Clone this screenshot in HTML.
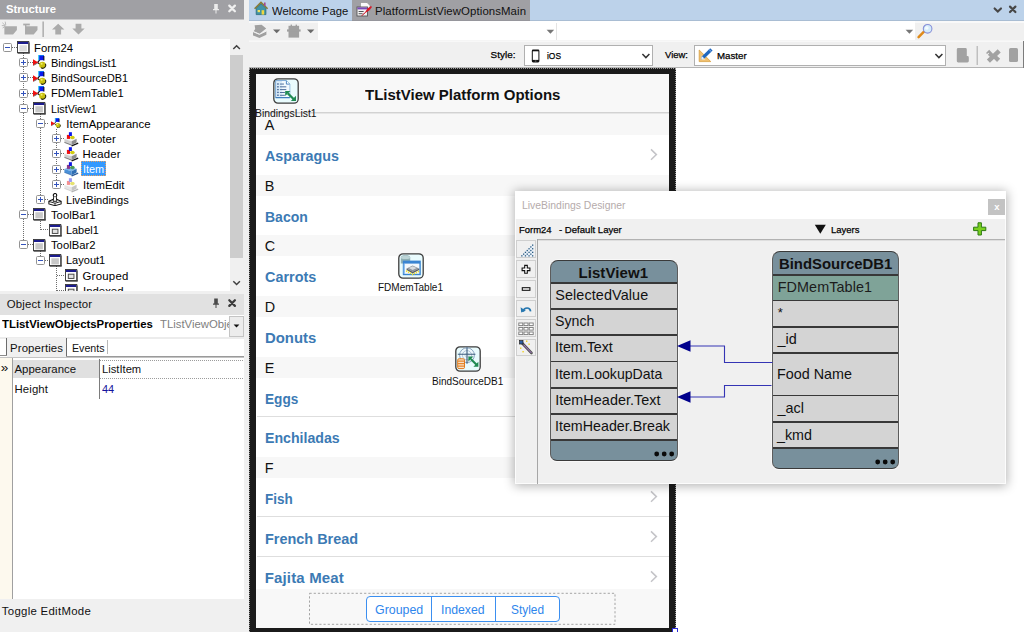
<!DOCTYPE html>
<html lang="en"><head><meta charset="utf-8"><title>PlatformListViewOptionsMain</title>
<style>
html,body{margin:0;padding:0;}
body{width:1024px;height:632px;overflow:hidden;position:relative;background:#f0f0f0;font-family:"Liberation Sans",sans-serif;}
body div,body span.t,body svg{position:absolute;}
div{box-sizing:border-box;}
.t{display:block;line-height:20px;height:20px;white-space:pre;}

</style></head>
<body>
<div style="left:0px;top:0px;width:244px;height:19px;background:#a0a0a4;"></div>
<div style="left:0px;top:19px;width:244px;height:1px;background:#c6c6c8;"></div>
<span class="t" id="t0" style="left:6.20px;top:-0.75px;font-size:11.4px;color:#fff;font-weight:bold;transform:scaleX(0.9873);transform-origin:0 0;">Structure</span>
<svg style="left:210px;top:2px" width="30" height="14" viewBox="0 0 30 14">
<path d="M4.2 2h3.6v5h1.2v1.2H6.5v3.3h-1V8.2H3V7h1.2z" fill="#ececec"/>
<path d="M19.3 3.3l5.6 5.6M24.9 3.3l-5.6 5.6" stroke="#f0f0f0" stroke-width="2.3" stroke-linecap="round" transform="translate(0,0.3)"/>
</svg>
<div style="left:0px;top:20px;width:244px;height:19px;background:#f0f0f0;"></div>
<svg style="left:0;top:19px" width="100" height="20" viewBox="0 0 100 20">
<g fill="#ababab">
<path d="M4.400 7.300h12.500v3.800l-3.800 4.400H4.400z"/><path d="M2.400 3.800l3 2.800M5.200 2.600l0.600 3.600M1.800 6.600h3.400M2.600 9l2.400-1.600" stroke="#b4b4b4" stroke-width="0.900" fill="none"/>
<path d="M25 7.300h12.500v3.800l-3.800 4.400H25z"/><path d="M23.200 4.600h6.600v1.800h-6.600z" /><rect x="25" y="5" width="1.400" height="9"/>
<rect x="42.600" y="2.500" width="1" height="15.500" fill="#8c8c8c"/>
<path d="M58.200 4.800l6.200 5.800h-3.300v4.800h-5.800v-4.800H52z"/>
<path d="M78.500 15.400l6.200-5.800h-3.300V4.800h-5.800v4.800h-3.300z"/>
</g></svg>
<div style="left:0px;top:39px;width:230px;height:252px;background:#fff;"></div>
<div style="left:230px;top:39px;width:13px;height:252px;background:#f0f0f0;"></div>
<div style="left:230px;top:55px;width:13px;height:202.5px;background:#cdcdcd;"></div>
<svg style="left:230px;top:39px" width="13" height="252" viewBox="0 0 13 252">
<path d="M3.3 10L6.6 6.700l3.300 3.300" stroke="#404040" stroke-width="1.5" fill="none"/>
<path d="M3.3 242.2l3.3 3.3 3.3-3.3" stroke="#404040" stroke-width="1.5" fill="none"/>
</svg>
<div style="left:0;top:39px;width:230px;height:252px;overflow:hidden"><div style="left:0;top:-39px;width:230px;height:400px">
<div style="left:23px;top:53.4px;width:1px;height:187.5px;background:repeating-linear-gradient(to bottom,#6e6e6e 0 1px,transparent 1px 2px)"></div>
<div style="left:40px;top:114.2px;width:1px;height:81.1px;background:repeating-linear-gradient(to bottom,#6e6e6e 0 1px,transparent 1px 2px)"></div>
<div style="left:56px;top:129.3px;width:1px;height:50.8px;background:repeating-linear-gradient(to bottom,#6e6e6e 0 1px,transparent 1px 2px)"></div>
<div style="left:40px;top:220.5px;width:1px;height:9.2px;background:repeating-linear-gradient(to bottom,#6e6e6e 0 1px,transparent 1px 2px)"></div>
<div style="left:40px;top:250.9px;width:1px;height:5.2px;background:repeating-linear-gradient(to bottom,#6e6e6e 0 1px,transparent 1px 2px)"></div>
<div style="left:56px;top:266.1px;width:1px;height:39.6px;background:repeating-linear-gradient(to bottom,#6e6e6e 0 1px,transparent 1px 2px)"></div>
<div style="left:12.0px;top:47.0px;width:4.5px;height:1px;background:repeating-linear-gradient(to right,#6e6e6e 0 1px,transparent 1px 2px)"></div>
<svg style="left:3px;top:43px" width="9" height="9" viewBox="0 0 9 9">
<rect x="0.5" y="0.5" width="8" height="8" rx="1.100" fill="#fff" stroke="#939393"/>
<rect x="2" y="4" width="5" height="1" fill="#3353bc"/></svg>
<svg style="left:17px;top:41.1px" width="13.2" height="13.2" viewBox="0 0 14 14">
<rect x="0.5" y="0.5" width="12" height="12" fill="#fff" stroke="#3a3a3a"/>
<rect x="1" y="1" width="11" height="2.2" fill="#1c1c8e"/>
<rect x="2.5" y="4.5" width="8" height="6.5" fill="#dcdcdc"/>
<rect x="1" y="12" width="12.5" height="1.3" fill="#2e2e2e"/><rect x="12.2" y="1.5" width="1.3" height="11.5" fill="#4a4a4a"/>
</svg>
<span class="t" id="t1" style="left:34.00px;top:37.80px;font-size:11.4px;color:#000;transform:scaleX(0.9936);transform-origin:0 0;">Form24</span>
<div style="left:28.0px;top:62.0px;width:4.5px;height:1px;background:repeating-linear-gradient(to right,#6e6e6e 0 1px,transparent 1px 2px)"></div>
<svg style="left:19px;top:58px" width="9" height="9" viewBox="0 0 9 9">
<rect x="0.5" y="0.5" width="8" height="8" rx="1.100" fill="#fff" stroke="#939393"/>
<rect x="2" y="4" width="5" height="1" fill="#3353bc"/><rect x="4" y="2" width="1" height="5" fill="#3353bc"/></svg>
<svg style="left:33px;top:55.3px" width="14.0" height="14.0" viewBox="0 0 14 14">
<path d="M4.600 7.400L7 4.600M4.600 7.600l2.400 1.600" stroke="#111" stroke-width="1.200"/>
<path d="M0 4.300l5.400 3.200L0 10.700z" fill="#f01010"/><path d="M0.5 10.3l4-2.2" stroke="#777" stroke-width="1"/>
<rect x="5.8" y="0" width="5.2" height="5.2" fill="#0a18ee"/><path d="M5.8 5.2V0H11" stroke="#19c8f0" stroke-width="1" fill="none"/>
<rect x="10.4" y="1" width="1" height="4.6" fill="#111"/>
<circle cx="9.400" cy="9.900" r="3.200" fill="#c8c010"/><path d="M12.300 8.800a3 3 0 0 1-4.200 4" stroke="#2a2a10" stroke-width="1.100" fill="none"/>
<circle cx="8.6" cy="8.8" r="1" fill="#f0ee70"/>
</svg>
<span class="t" id="t2" style="left:50.60px;top:52.99px;font-size:11.4px;color:#000;transform:scaleX(0.9680);transform-origin:0 0;">BindingsList1</span>
<div style="left:28.0px;top:77.0px;width:4.5px;height:1px;background:repeating-linear-gradient(to right,#6e6e6e 0 1px,transparent 1px 2px)"></div>
<svg style="left:19px;top:73px" width="9" height="9" viewBox="0 0 9 9">
<rect x="0.5" y="0.5" width="8" height="8" rx="1.100" fill="#fff" stroke="#939393"/>
<rect x="2" y="4" width="5" height="1" fill="#3353bc"/><rect x="4" y="2" width="1" height="5" fill="#3353bc"/></svg>
<svg style="left:33px;top:70.5px" width="14.0" height="14.0" viewBox="0 0 14 14">
<path d="M4.600 7.400L7 4.600M4.600 7.600l2.400 1.600" stroke="#111" stroke-width="1.200"/>
<path d="M0 4.300l5.400 3.200L0 10.700z" fill="#f01010"/><path d="M0.5 10.3l4-2.2" stroke="#777" stroke-width="1"/>
<rect x="5.8" y="0" width="5.2" height="5.2" fill="#0a18ee"/><path d="M5.8 5.2V0H11" stroke="#19c8f0" stroke-width="1" fill="none"/>
<rect x="10.4" y="1" width="1" height="4.6" fill="#111"/>
<circle cx="9.400" cy="9.900" r="3.200" fill="#c8c010"/><path d="M12.300 8.800a3 3 0 0 1-4.200 4" stroke="#2a2a10" stroke-width="1.100" fill="none"/>
<circle cx="8.6" cy="8.8" r="1" fill="#f0ee70"/>
</svg>
<span class="t" id="t3" style="left:50.60px;top:68.18px;font-size:11.4px;color:#000;transform:scaleX(0.9499);transform-origin:0 0;">BindSourceDB1</span>
<div style="left:28.0px;top:93.0px;width:4.5px;height:1px;background:repeating-linear-gradient(to right,#6e6e6e 0 1px,transparent 1px 2px)"></div>
<svg style="left:19px;top:89px" width="9" height="9" viewBox="0 0 9 9">
<rect x="0.5" y="0.5" width="8" height="8" rx="1.100" fill="#fff" stroke="#939393"/>
<rect x="2" y="4" width="5" height="1" fill="#3353bc"/><rect x="4" y="2" width="1" height="5" fill="#3353bc"/></svg>
<svg style="left:33px;top:85.7px" width="14.0" height="14.0" viewBox="0 0 14 14">
<path d="M4.600 7.400L7 4.600M4.600 7.600l2.400 1.600" stroke="#111" stroke-width="1.200"/>
<path d="M0 4.300l5.400 3.200L0 10.700z" fill="#f01010"/><path d="M0.5 10.3l4-2.2" stroke="#777" stroke-width="1"/>
<rect x="5.8" y="0" width="5.2" height="5.2" fill="#0a18ee"/><path d="M5.8 5.2V0H11" stroke="#19c8f0" stroke-width="1" fill="none"/>
<rect x="10.4" y="1" width="1" height="4.6" fill="#111"/>
<circle cx="9.400" cy="9.900" r="3.200" fill="#c8c010"/><path d="M12.300 8.800a3 3 0 0 1-4.200 4" stroke="#2a2a10" stroke-width="1.100" fill="none"/>
<circle cx="8.6" cy="8.8" r="1" fill="#f0ee70"/>
</svg>
<span class="t" id="t4" style="left:50.60px;top:83.37px;font-size:11.4px;color:#000;transform:scaleX(0.9830);transform-origin:0 0;">FDMemTable1</span>
<div style="left:28.0px;top:108.0px;width:4.5px;height:1px;background:repeating-linear-gradient(to right,#6e6e6e 0 1px,transparent 1px 2px)"></div>
<svg style="left:19px;top:104px" width="9" height="9" viewBox="0 0 9 9">
<rect x="0.5" y="0.5" width="8" height="8" rx="1.100" fill="#fff" stroke="#939393"/>
<rect x="2" y="4" width="5" height="1" fill="#3353bc"/></svg>
<svg style="left:33px;top:101.9px" width="13.2" height="13.2" viewBox="0 0 14 14">
<rect x="0.5" y="0.5" width="12" height="12" fill="#fff" stroke="#3a3a3a"/>
<rect x="1" y="1" width="11" height="2.2" fill="#1c1c8e"/>
<rect x="2.5" y="4.5" width="8" height="6.5" fill="#c8c8c8"/>
<rect x="1" y="12" width="12.5" height="1.3" fill="#2e2e2e"/><rect x="12.2" y="1.5" width="1.3" height="11.5" fill="#4a4a4a"/>
</svg>
<span class="t" id="t5" style="left:50.60px;top:98.56px;font-size:11.4px;color:#000;transform:scaleX(0.9434);transform-origin:0 0;">ListView1</span>
<div style="left:45.0px;top:123.0px;width:3.8px;height:1px;background:repeating-linear-gradient(to right,#6e6e6e 0 1px,transparent 1px 2px)"></div>
<svg style="left:36px;top:119px" width="9" height="9" viewBox="0 0 9 9">
<rect x="0.5" y="0.5" width="8" height="8" rx="1.100" fill="#fff" stroke="#939393"/>
<rect x="2" y="4" width="5" height="1" fill="#3353bc"/></svg>
<svg style="left:50.9px;top:118.0px" width="10.4" height="10.4" viewBox="0 0 14 14">
<path d="M4.600 7.400L7 4.600M4.600 7.600l2.400 1.600" stroke="#111" stroke-width="1.200"/>
<path d="M0 4.300l5.400 3.200L0 10.700z" fill="#f01010"/><path d="M0.5 10.3l4-2.2" stroke="#777" stroke-width="1"/>
<rect x="5.8" y="0" width="5.2" height="5.2" fill="#0a18ee"/><path d="M5.8 5.2V0H11" stroke="#19c8f0" stroke-width="1" fill="none"/>
<rect x="10.4" y="1" width="1" height="4.6" fill="#111"/>
<circle cx="9.400" cy="9.900" r="3.200" fill="#c8c010"/><path d="M12.300 8.800a3 3 0 0 1-4.200 4" stroke="#2a2a10" stroke-width="1.100" fill="none"/>
<circle cx="8.6" cy="8.8" r="1" fill="#f0ee70"/>
</svg>
<span class="t" id="t6" style="left:66.30px;top:113.75px;font-size:11.4px;color:#000;letter-spacing:0.047px;">ItemAppearance</span>
<div style="left:61.0px;top:138.0px;width:4.0px;height:1px;background:repeating-linear-gradient(to right,#6e6e6e 0 1px,transparent 1px 2px)"></div>
<svg style="left:52px;top:134px" width="9" height="9" viewBox="0 0 9 9">
<rect x="0.5" y="0.5" width="8" height="8" rx="1.100" fill="#fff" stroke="#939393"/>
<rect x="2" y="4" width="5" height="1" fill="#3353bc"/><rect x="4" y="2" width="1" height="5" fill="#3353bc"/></svg>
<svg style="left:64.0px;top:131.0px" width="16" height="16" viewBox="0 0 16 16">
<path d="M7.600 14.900l6.600-2.800" stroke="#161616" stroke-width="1.300"/>
<path d="M0.400 8.100L5.400 5.900l7.200 1.900L7.600 10.300z" fill="#f4f4f4"/>
<path d="M0.400 8.100l7.200 2.200v3.900L0.400 11.400z" fill="#cfcfcf"/>
<path d="M7.600 10.300l5-2.500v3.600l-5 2.800z" fill="#8c8c8c"/>
<path d="M0.400 11.400l7.200 2.800" stroke="#161616" stroke-width="0.700" opacity="0.700"/>
<rect x="2.900" y="3.900" width="3.100" height="4" fill="#ee1010"/>
<rect x="4.900" y="1.200" width="3" height="3.800" fill="#0a18ee"/>
<ellipse cx="8.400" cy="6.500" rx="2.300" ry="1.800" fill="#d2cc10"/>
</svg>
<span class="t" id="t7" style="left:82.50px;top:128.94px;font-size:11.4px;color:#000;letter-spacing:0.076px;">Footer</span>
<div style="left:61.0px;top:153.0px;width:4.0px;height:1px;background:repeating-linear-gradient(to right,#6e6e6e 0 1px,transparent 1px 2px)"></div>
<svg style="left:52px;top:149px" width="9" height="9" viewBox="0 0 9 9">
<rect x="0.5" y="0.5" width="8" height="8" rx="1.100" fill="#fff" stroke="#939393"/>
<rect x="2" y="4" width="5" height="1" fill="#3353bc"/><rect x="4" y="2" width="1" height="5" fill="#3353bc"/></svg>
<svg style="left:64.0px;top:146.20000000000002px" width="16" height="16" viewBox="0 0 16 16">
<path d="M7.600 14.900l6.600-2.800" stroke="#161616" stroke-width="1.300"/>
<path d="M0.400 8.100L5.400 5.900l7.200 1.900L7.600 10.300z" fill="#f4f4f4"/>
<path d="M0.400 8.100l7.200 2.200v3.900L0.400 11.400z" fill="#cfcfcf"/>
<path d="M7.600 10.300l5-2.500v3.600l-5 2.800z" fill="#8c8c8c"/>
<path d="M0.400 11.400l7.200 2.800" stroke="#161616" stroke-width="0.700" opacity="0.700"/>
<rect x="2.900" y="3.900" width="3.100" height="4" fill="#ee1010"/>
<rect x="4.900" y="1.200" width="3" height="3.800" fill="#0a18ee"/>
<ellipse cx="8.400" cy="6.500" rx="2.300" ry="1.800" fill="#d2cc10"/>
</svg>
<span class="t" id="t8" style="left:82.50px;top:144.13px;font-size:11.4px;color:#000;letter-spacing:0.128px;">Header</span>
<div style="left:61.0px;top:169.0px;width:4.0px;height:1px;background:repeating-linear-gradient(to right,#6e6e6e 0 1px,transparent 1px 2px)"></div>
<svg style="left:52px;top:165px" width="9" height="9" viewBox="0 0 9 9">
<rect x="0.5" y="0.5" width="8" height="8" rx="1.100" fill="#fff" stroke="#939393"/>
<rect x="2" y="4" width="5" height="1" fill="#3353bc"/><rect x="4" y="2" width="1" height="5" fill="#3353bc"/></svg>
<svg style="left:64.0px;top:161.4px" width="16" height="16" viewBox="0 0 16 16">
<path d="M7.600 14.900l6.600-2.800" stroke="#2a5a98" stroke-width="1.300"/>
<path d="M0.400 8.100L5.400 5.900l7.200 1.900L7.600 10.300z" fill="#7ab4e6"/>
<path d="M0.400 8.100l7.200 2.200v3.900L0.400 11.400z" fill="#4a90d8"/>
<path d="M7.600 10.300l5-2.500v3.600l-5 2.800z" fill="#2f6fb4"/>
<path d="M0.400 11.400l7.200 2.800" stroke="#2a5a98" stroke-width="0.700" opacity="0.700"/>
<rect x="2.900" y="3.900" width="3.100" height="4" fill="#8a3a8a"/>
<rect x="4.900" y="1.200" width="3" height="3.800" fill="#1018e0"/>
<ellipse cx="8.400" cy="6.500" rx="2.300" ry="1.800" fill="#4a9a58"/>
</svg>
<div style="left:80.5px;top:161.3px;width:25.5px;height:14.4px;background:#3399ff;border:1px dotted #e8a060;"></div>
<span class="t" id="t9" style="left:82.50px;top:159.32px;font-size:11.4px;color:#fff;transform:scaleX(0.9523);transform-origin:0 0;">Item</span>
<div style="left:61.0px;top:184.0px;width:4.0px;height:1px;background:repeating-linear-gradient(to right,#6e6e6e 0 1px,transparent 1px 2px)"></div>
<svg style="left:52px;top:180px" width="9" height="9" viewBox="0 0 9 9">
<rect x="0.5" y="0.5" width="8" height="8" rx="1.100" fill="#fff" stroke="#939393"/>
<rect x="2" y="4" width="5" height="1" fill="#3353bc"/><rect x="4" y="2" width="1" height="5" fill="#3353bc"/></svg>
<svg style="left:64.0px;top:176.60000000000002px" width="16" height="16" viewBox="0 0 16 16">
<path d="M7.600 14.900l6.600-2.800" stroke="#b4b4b4" stroke-width="1.300"/>
<path d="M0.400 8.100L5.400 5.900l7.200 1.900L7.600 10.300z" fill="#fafafa"/>
<path d="M0.400 8.100l7.200 2.200v3.900L0.400 11.400z" fill="#e6e6e6"/>
<path d="M7.600 10.300l5-2.500v3.600l-5 2.800z" fill="#c4c4c4"/>
<path d="M0.400 11.400l7.200 2.800" stroke="#b4b4b4" stroke-width="0.700" opacity="0.700"/>
<rect x="2.900" y="3.900" width="3.100" height="4" fill="#f49090"/>
<rect x="4.900" y="1.200" width="3" height="3.800" fill="#9a9af4"/>
<ellipse cx="8.400" cy="6.500" rx="2.300" ry="1.800" fill="#e6e270"/>
</svg>
<span class="t" id="t10" style="left:82.50px;top:174.51px;font-size:11.4px;color:#000;transform:scaleX(0.9933);transform-origin:0 0;">ItemEdit</span>
<div style="left:45.0px;top:199.0px;width:3.8px;height:1px;background:repeating-linear-gradient(to right,#6e6e6e 0 1px,transparent 1px 2px)"></div>
<svg style="left:36px;top:195px" width="9" height="9" viewBox="0 0 9 9">
<rect x="0.5" y="0.5" width="8" height="8" rx="1.100" fill="#fff" stroke="#939393"/>
<rect x="2" y="4" width="5" height="1" fill="#3353bc"/><rect x="4" y="2" width="1" height="5" fill="#3353bc"/></svg>
<svg style="left:47.599999999999994px;top:193.3px" width="14" height="13.1" viewBox="0 0 16 15">
<path d="M1 9.5l5-2.3h4l5 2.3v3l-7 2-7-2z" fill="#fff" stroke="#111" stroke-width="1.2"/>
<path d="M1 9.7l7 2 7-2M8 11.7v2.6" stroke="#111" stroke-width="1" fill="none"/>
<circle cx="8" cy="2.6" r="2" fill="#fff" stroke="#111" stroke-width="1.3"/>
<path d="M6.6 4.4L5.8 9.5h4.4L9.4 4.4" fill="#fff" stroke="#111" stroke-width="1.1"/>
</svg>
<span class="t" id="t11" style="left:66.30px;top:189.70px;font-size:11.4px;color:#000;transform:scaleX(0.9707);transform-origin:0 0;">LiveBindings</span>
<div style="left:28.0px;top:214.0px;width:4.5px;height:1px;background:repeating-linear-gradient(to right,#6e6e6e 0 1px,transparent 1px 2px)"></div>
<svg style="left:19px;top:210px" width="9" height="9" viewBox="0 0 9 9">
<rect x="0.5" y="0.5" width="8" height="8" rx="1.100" fill="#fff" stroke="#939393"/>
<rect x="2" y="4" width="5" height="1" fill="#3353bc"/></svg>
<svg style="left:33px;top:208.2px" width="13.2" height="13.2" viewBox="0 0 14 14">
<rect x="0.5" y="0.5" width="12" height="12" fill="#fff" stroke="#3a3a3a"/>
<rect x="1" y="1" width="11" height="2.2" fill="#1c1c8e"/>
<rect x="2.5" y="4.5" width="8" height="6.5" fill="#c8c8c8"/>
<rect x="1" y="12" width="12.5" height="1.3" fill="#2e2e2e"/><rect x="12.2" y="1.5" width="1.3" height="11.5" fill="#4a4a4a"/>
</svg>
<span class="t" id="t12" style="left:50.60px;top:204.89px;font-size:11.4px;color:#000;transform:scaleX(0.9874);transform-origin:0 0;">ToolBar1</span>
<div style="left:40.5px;top:229.0px;width:8.3px;height:1px;background:repeating-linear-gradient(to right,#6e6e6e 0 1px,transparent 1px 2px)"></div>
<svg style="left:48.9px;top:223.6px" width="13.2" height="13.2" viewBox="0 0 14 14">
<rect x="0.5" y="0.5" width="12" height="12" fill="#fff" stroke="#3a3a3a"/>
<rect x="1" y="1" width="11" height="2.2" fill="#1c1c8e"/>
<rect x="3.5" y="5.5" width="6" height="4.5" fill="#e4e4e4" stroke="#444"/>
<rect x="1" y="12" width="12.5" height="1.3" fill="#2e2e2e"/><rect x="12.2" y="1.5" width="1.3" height="11.5" fill="#4a4a4a"/>
</svg>
<span class="t" id="t13" style="left:66.30px;top:220.08px;font-size:11.4px;color:#000;transform:scaleX(0.9556);transform-origin:0 0;">Label1</span>
<div style="left:28.0px;top:244.0px;width:4.5px;height:1px;background:repeating-linear-gradient(to right,#6e6e6e 0 1px,transparent 1px 2px)"></div>
<svg style="left:19px;top:240px" width="9" height="9" viewBox="0 0 9 9">
<rect x="0.5" y="0.5" width="8" height="8" rx="1.100" fill="#fff" stroke="#939393"/>
<rect x="2" y="4" width="5" height="1" fill="#3353bc"/></svg>
<svg style="left:33px;top:238.6px" width="13.2" height="13.2" viewBox="0 0 14 14">
<rect x="0.5" y="0.5" width="12" height="12" fill="#fff" stroke="#3a3a3a"/>
<rect x="1" y="1" width="11" height="2.2" fill="#1c1c8e"/>
<rect x="2.5" y="4.5" width="8" height="6.5" fill="#c8c8c8"/>
<rect x="1" y="12" width="12.5" height="1.3" fill="#2e2e2e"/><rect x="12.2" y="1.5" width="1.3" height="11.5" fill="#4a4a4a"/>
</svg>
<span class="t" id="t14" style="left:50.60px;top:235.27px;font-size:11.4px;color:#000;transform:scaleX(0.9874);transform-origin:0 0;">ToolBar2</span>
<div style="left:45.0px;top:260.0px;width:3.8px;height:1px;background:repeating-linear-gradient(to right,#6e6e6e 0 1px,transparent 1px 2px)"></div>
<svg style="left:36px;top:256px" width="9" height="9" viewBox="0 0 9 9">
<rect x="0.5" y="0.5" width="8" height="8" rx="1.100" fill="#fff" stroke="#939393"/>
<rect x="2" y="4" width="5" height="1" fill="#3353bc"/></svg>
<svg style="left:49.3px;top:253.8px" width="13.2" height="13.2" viewBox="0 0 14 14">
<rect x="0.5" y="0.5" width="12" height="12" fill="#fff" stroke="#3a3a3a"/>
<rect x="1" y="1" width="11" height="2.2" fill="#1c1c8e"/>
<rect x="2.5" y="4.5" width="8" height="6.5" fill="#c8c8c8"/>
<rect x="1" y="12" width="12.5" height="1.3" fill="#2e2e2e"/><rect x="12.2" y="1.5" width="1.3" height="11.5" fill="#4a4a4a"/>
</svg>
<span class="t" id="t15" style="left:66.30px;top:250.46px;font-size:11.4px;color:#000;transform:scaleX(0.9668);transform-origin:0 0;">Layout1</span>
<div style="left:56.5px;top:275.0px;width:8.5px;height:1px;background:repeating-linear-gradient(to right,#6e6e6e 0 1px,transparent 1px 2px)"></div>
<svg style="left:65.1px;top:269.09999999999997px" width="13.2" height="13.2" viewBox="0 0 14 14">
<rect x="0.5" y="0.5" width="12" height="12" fill="#fff" stroke="#3a3a3a"/>
<rect x="1" y="1" width="11" height="2.2" fill="#1c1c8e"/>
<rect x="3.5" y="5.5" width="6" height="4.5" fill="#e4e4e4" stroke="#444"/>
<rect x="1" y="12" width="12.5" height="1.3" fill="#2e2e2e"/><rect x="12.2" y="1.5" width="1.3" height="11.5" fill="#4a4a4a"/>
</svg>
<span class="t" id="t16" style="left:82.50px;top:265.65px;font-size:11.4px;color:#000;letter-spacing:0.262px;">Grouped</span>
<div style="left:56.5px;top:290.0px;width:8.5px;height:1px;background:repeating-linear-gradient(to right,#6e6e6e 0 1px,transparent 1px 2px)"></div>
<svg style="left:65.1px;top:284.3px" width="13.2" height="13.2" viewBox="0 0 14 14">
<rect x="0.5" y="0.5" width="12" height="12" fill="#fff" stroke="#3a3a3a"/>
<rect x="1" y="1" width="11" height="2.2" fill="#1c1c8e"/>
<rect x="3.5" y="5.5" width="6" height="4.5" fill="#e4e4e4" stroke="#444"/>
<rect x="1" y="12" width="12.5" height="1.3" fill="#2e2e2e"/><rect x="12.2" y="1.5" width="1.3" height="11.5" fill="#4a4a4a"/>
</svg>
<span class="t" id="t17" style="left:82.50px;top:280.84px;font-size:11.4px;color:#000;transform:scaleX(0.9988);transform-origin:0 0;">Indexed</span>
</div></div>
<div style="left:0px;top:294px;width:244px;height:21px;background:#e1e1e1;"></div>
<span class="t" id="t18" style="left:6.80px;top:294.25px;font-size:11.4px;color:#111;letter-spacing:0.150px;">Object Inspector</span>
<svg style="left:210px;top:296px" width="30" height="16" viewBox="0 0 30 16">
<path d="M4.2 2.5h3.6v5h1.2v1.2H6.5V12h-1V8.7H3V7.5h1.2z" fill="#4a4a4a"/>
<path d="M19.3 4.3l5.6 5.6M24.9 4.3l-5.6 5.6" stroke="#3c3c3c" stroke-width="2.3" stroke-linecap="round"/>
</svg>
<div style="left:0px;top:315px;width:244px;height:22px;background:#fff;"></div>
<div style="left:0;top:315px;width:229px;height:22px;overflow:hidden"><div style="left:0;top:-315px;width:400px;height:400px">
<span class="t" id="t19" style="left:2.20px;top:314.35px;font-size:11.4px;color:#000;font-weight:bold;transform:scaleX(0.9981);transform-origin:0 0;">TListViewObjectsProperties</span>
<span class="t" id="t20" style="left:160.00px;top:314.35px;font-size:11.4px;color:#808080;transform:scaleX(0.9950);transform-origin:0 0;">TListViewObjectsProperties</span>
</div></div>
<div style="left:229px;top:315.5px;width:15px;height:21.5px;background:#ececec;border:1px solid #c4c4c4;"></div>
<svg style="left:233px;top:324px" width="8" height="5" viewBox="0 0 8 5"><path d="M0.6 0.6h5.8l-2.9 3z" fill="#111"/></svg>
<div style="left:0px;top:337px;width:244px;height:21px;background:#fff;"></div>
<div style="left:0px;top:337px;width:244px;height:1.5px;background:#ececec;"></div>
<div style="left:6.5px;top:338px;width:60px;height:18.5px;background:#f0f0f0;"></div>
<div style="left:6px;top:338px;width:1px;height:18px;background:#6c6c6c;"></div>
<div style="left:0px;top:355px;width:6.5px;height:1px;background:#8c8c8c;"></div>
<div style="left:66px;top:338px;width:1px;height:19px;background:#6c6c6c;"></div>
<div style="left:107px;top:340px;width:1px;height:14px;background:#b8b8b8;"></div>
<div style="left:66px;top:356px;width:178px;height:1px;background:#9a9a9a;"></div>
<div style="left:0px;top:357px;width:244px;height:1px;background:#c4c4c4;"></div>
<span class="t" id="t21" style="left:10.00px;top:337.85px;font-size:11.4px;color:#111;letter-spacing:0.120px;">Properties</span>
<span class="t" id="t22" style="left:71.50px;top:337.85px;font-size:11.4px;color:#111;transform:scaleX(0.9332);transform-origin:0 0;">Events</span>
<div style="left:0px;top:358px;width:244px;height:241px;background:#fff;"></div>
<div style="left:0px;top:358px;width:12px;height:241px;background:#fdf9ee;"></div>
<div style="left:12px;top:358px;width:1px;height:241px;background:#a0a0a0;"></div>
<div style="left:13px;top:359.5px;width:86px;height:18px;background:#e0e0e0;"></div>
<div style="left:99px;top:359px;width:1px;height:39.5px;background:#7c7c7c;"></div>
<div style="left:100.0px;top:359.5px;width:144.0px;height:1px;background:repeating-linear-gradient(to right,#9c9c9c 0 1px,transparent 1px 2px)"></div>
<div style="left:100.0px;top:377.5px;width:144.0px;height:1px;background:repeating-linear-gradient(to right,#9c9c9c 0 1px,transparent 1px 2px)"></div>
<span class="t" id="t23" style="left:0.80px;top:357.72px;font-size:13.5px;color:#111;">»</span>
<span class="t" id="t24" style="left:14.40px;top:358.65px;font-size:11.4px;color:#111;letter-spacing:0.040px;">Appearance</span>
<span class="t" id="t25" style="left:102.00px;top:359.05px;font-size:11.4px;color:#111;transform:scaleX(0.9827);transform-origin:0 0;">ListItem</span>
<span class="t" id="t26" style="left:14.40px;top:378.65px;font-size:11.4px;color:#111;letter-spacing:0.133px;">Height</span>
<span class="t" id="t27" style="left:102.00px;top:378.65px;font-size:11.4px;color:#14149c;transform:scaleX(0.9628);transform-origin:0 0;">44</span>
<span class="t" id="t28" style="left:1.80px;top:601.35px;font-size:11.4px;color:#111;letter-spacing:0.296px;">Toggle EditMode</span>
<div style="left:249px;top:0px;width:775px;height:21px;background:#bcd2ea;"></div>
<div style="left:352px;top:0px;width:178px;height:21px;background:#a0a0a4;"></div>
<svg style="left:254px;top:1px" width="15" height="15" viewBox="0 0 15 15">
<path d="M0.6 7.8L7 1.4l6.6 6.4" stroke="#8a7a30" stroke-width="1.6" fill="none"/>
<rect x="10" y="1.5" width="1.6" height="3.4" fill="#a04a90"/>
<path d="M2.2 7.4L7 2.9l4.9 4.5v6.2H2.2z" fill="#3f93a6" stroke="#2a6a78" stroke-width="0.8"/>
<rect x="3.6" y="9" width="2.4" height="2.2" fill="#f0e060"/>
<rect x="7.6" y="9.2" width="2.6" height="4.4" fill="#f0d840"/>
</svg>
<span class="t" id="t29" style="left:271.80px;top:0.80px;font-size:11.4px;color:#111;transform:scaleX(0.9892);transform-origin:0 0;">Welcome Page</span>
<svg style="left:356px;top:2px" width="17" height="15" viewBox="0 0 17 15">
<path d="M4.5 0.5h6.5l3 3v5h-9.5z" fill="#fafafa" stroke="#888" stroke-width="0.6"/>
<rect x="1" y="5" width="10.5" height="9" fill="#f4f4f4" stroke="#555" stroke-width="0.9"/>
<rect x="1.4" y="5.4" width="9.7" height="2" fill="#7a4ab8"/>
<rect x="2.6" y="9" width="5" height="1" fill="#555"/><rect x="2.6" y="11.2" width="4" height="1" fill="#555"/>
<path d="M6 13.5l3.2-3.4 2.2-3.6 3.6-2.6 1 1.2-2.8 3.4-3.6 2.2z" fill="#d81828"/>
<path d="M5.6 14l3-3" stroke="#c01020" stroke-width="0.9"/>
</svg>
<span class="t" id="t30" style="left:375.00px;top:0.80px;font-size:11.4px;color:#111;letter-spacing:0.094px;">PlatformListViewOptionsMain</span>
<svg style="left:990px;top:3px" width="30" height="14" viewBox="0 0 30 14">
<path d="M4.600 5.400l3.200 3.200 3.200-3.200" stroke="#474747" stroke-width="2.100" fill="none" stroke-linecap="round"/>
<path d="M20 3.600l5.400 5.400M25.400 3.600l-5.400 5.400" stroke="#474747" stroke-width="2.200" stroke-linecap="round"/>
</svg>
<div style="left:249px;top:21px;width:775px;height:20px;background:#f0f0f0;"></div>
<div style="left:249px;top:20px;width:775px;height:1px;background:#a9bdd3;"></div>
<div style="left:352px;top:20px;width:178px;height:1px;background:#96969c;"></div>
<div style="left:249px;top:21px;width:775px;height:2px;background:#f9f9f9;"></div>
<div style="left:318px;top:21px;width:597px;height:19px;background:#fff;"></div>
<div style="left:249px;top:40px;width:775px;height:1px;background:#f5f5f5;"></div>
<div style="left:556px;top:23px;width:1px;height:17px;background:#e4e4e4;"></div>
<svg style="left:249px;top:22px" width="70" height="18" viewBox="0 0 70 18">
<g fill="#a0a0a0">
<path d="M4 9.800l6.400 2.800 7-3.400v3.600l-7 3.200L4 13.400z"/><path d="M5.600 3.200l7-0.400 4.600 3.600-6.600 5.400-6-2.600 1.600-2.200z"/>
<path d="M4 9.600l6.400 2.800 7-3.400" stroke="#f0f0f0" stroke-width="1" fill="none"/>
<path d="M24 7.4h7.4l-3.7 3.8z" fill="#6a6a6a"/>
<rect x="39.5" y="3.8" width="10.6" height="11.8"/><rect x="38" y="7.4" width="13.6" height="2.2"/><rect x="41.6" y="2.6" width="1.4" height="2"/><rect x="46.6" y="2.6" width="1.4" height="2"/>
<path d="M58 7.4h7.4l-3.7 3.8z" fill="#6a6a6a"/>
</g></svg>
<svg style="left:546px;top:29px" width="9" height="6" viewBox="0 0 9 6"><path d="M0.6 0.8h7.6L4.4 4.8z" fill="#777"/></svg>
<svg style="left:905px;top:29px" width="9" height="6" viewBox="0 0 9 6"><path d="M0.6 0.8h7.6L4.4 4.8z" fill="#777"/></svg>
<svg style="left:917px;top:23px" width="18" height="17" viewBox="0 0 18 17">
<path d="M1.6 14.2l5.6-5.8" stroke="#e08a18" stroke-width="2.4" stroke-linecap="round"/>
<circle cx="10.6" cy="5.8" r="4.3" fill="#d4ecfa" stroke="#8890d8" stroke-width="1.1"/>
<circle cx="9.8" cy="5" r="1.8" fill="#f4fbff"/>
</svg>
<div style="left:249px;top:41px;width:775px;height:27px;background:#f0f0f0;"></div>
<div style="left:249px;top:41px;width:775px;height:1px;background:#f8f8f8;"></div>
<div style="left:249px;top:67px;width:775px;height:1px;background:#b4b4b4;"></div>
<div style="left:1023px;top:41px;width:1px;height:27px;background:#7c7c7c;"></div>
<span class="t" id="t31" style="left:490.60px;top:45.17px;font-size:9.9px;color:#000;letter-spacing:0.019px;-webkit-text-stroke:0.25px #000;">Style:</span>
<div style="left:524px;top:45px;width:129px;height:21px;background:#fff;border:1px solid #b0b0b0;"></div>
<svg style="left:531px;top:48.5px" width="10" height="14" viewBox="0 0 10 14">
<rect x="0.8" y="0.6" width="7.6" height="12.8" rx="1.3" fill="#111"/><rect x="1.8" y="2.3" width="5.6" height="8.6" fill="#fff"/><rect x="3.8" y="11.6" width="1.6" height="0.9" fill="#888"/>
</svg>
<span class="t" id="t32" style="left:546.80px;top:45.77px;font-size:9.9px;color:#000;transform:scaleX(0.8501);transform-origin:0 0;-webkit-text-stroke:0.25px #000;">iOS</span>
<svg style="left:641px;top:52px" width="10" height="8" viewBox="0 0 10 8"><path d="M1.4 2l3.5 3.6L8.4 2" stroke="#333" stroke-width="1.5" fill="none"/></svg>
<span class="t" id="t33" style="left:665.00px;top:45.27px;font-size:9.9px;color:#000;transform:scaleX(0.9590);transform-origin:0 0;-webkit-text-stroke:0.25px #000;">View:</span>
<div style="left:694px;top:45px;width:252px;height:21px;background:#fff;border:1px solid #b0b0b0;"></div>
<svg style="left:698px;top:47px" width="16" height="16" viewBox="0 0 16 16">
<path d="M1.2 3v11.6h11.6z" fill="#f0c070" stroke="#d8a040" stroke-width="0.8"/>
<path d="M3.6 8.6v3.8h3.8z" fill="#fff6e0"/>
<path d="M3 12.6l1-3.4 8.2-8 2.4 2.4-8.2 8z" fill="#2068c0"/><path d="M3 12.6l1-3.4 2.4 2.4z" fill="#e8f0fa"/>
<path d="M11 2.4l2.4 2.4" stroke="#9cc0ee" stroke-width="0.9"/>
</svg>
<span class="t" id="t34" style="left:716.60px;top:45.87px;font-size:9.9px;color:#000;transform:scaleX(0.9839);transform-origin:0 0;-webkit-text-stroke:0.25px #000;">Master</span>
<svg style="left:934px;top:52px" width="10" height="8" viewBox="0 0 10 8"><path d="M1.4 2l3.5 3.6L8.4 2" stroke="#333" stroke-width="1.5" fill="none"/></svg>
<svg style="left:955px;top:45px" width="66" height="20" viewBox="0 0 66 20">
<g fill="#a2a2a2">
<path d="M3.200 3h7.200a1.400 1.400 0 0 1 1.400 1.400v6.600h0.600a1.400 1.400 0 0 1 1.400 1.400v3.600a1.400 1.400 0 0 1-1.400 1.400H3.200a1.400 1.400 0 0 1-1.400-1.400V4.400A1.400 1.400 0 0 1 3.200 3z"/>
<rect x="21.6" y="1" width="1.2" height="19" fill="#b4b4b4"/>
<path d="M32.600 6.400l4.800 4.800M44.200 5.800l-10.800 10.400M40.400 12.200l3.200 3.200" stroke="#a2a2a2" stroke-width="4.400" stroke-linecap="butt" fill="none"/><path d="M31.200 10.600l2.600-2.400M43 11.400l2.600-1.200" stroke="#f0f0f0" stroke-width="1.100"/>
<rect x="54" y="3" width="9" height="14" rx="1.6"/>
</g></svg>
<div style="left:676px;top:68px;width:348px;height:564px;background:#fff;"></div>
<div style="left:244px;top:68px;width:5px;height:564px;background:#f0f0f0;"></div>
<div style="left:249px;top:68px;width:427px;height:570px;background:#1b1b1b;border:1px dotted #9a9a9a;"></div>
<div style="left:256px;top:74px;width:413px;height:554px;background:#fff;"></div>
<div style="left:256px;top:74px;width:413px;height:554px;overflow:hidden"><div style="left:-256px;top:-74px;width:1024px;height:700px">
<div style="left:256px;top:74px;width:413px;height:38.5px;background:#f8f8f8;"></div>
<div style="left:256px;top:112px;width:413px;height:1px;background:#d2d2d2;"></div>
<div style="left:256px;top:113px;width:413px;height:1px;background:#e6e6e6;"></div>
<span class="t" id="t35" style="left:365.00px;top:84.60px;font-size:15.0px;color:#111;font-weight:bold;transform:scaleX(0.9990);transform-origin:0 0;">TListView Platform Options</span>
<div style="left:256px;top:113.9px;width:413px;height:21.1px;background:#f7f7f7;"></div>
<span class="t" id="t36" style="left:264.70px;top:115.11px;font-size:14.4px;color:#111;">A</span>
<span class="t" id="t37" style="left:264.70px;top:145.95px;font-size:15.0px;color:#3c7ab4;font-weight:bold;transform:scaleX(0.9545);transform-origin:0 0;">Asparagus</span>
<svg style="left:649px;top:147.5px" width="10" height="13" viewBox="0 0 10 13"><path d="M2 1.4l5.4 5.2L2 11.8" stroke="#c4c4c8" stroke-width="1.5" fill="none"/></svg>
<div style="left:256px;top:174.6px;width:413px;height:21.1px;background:#f7f7f7;"></div>
<span class="t" id="t38" style="left:264.70px;top:175.78px;font-size:14.4px;color:#111;">B</span>
<span class="t" id="t39" style="left:264.70px;top:206.62px;font-size:15.0px;color:#3c7ab4;font-weight:bold;transform:scaleX(0.9336);transform-origin:0 0;">Bacon</span>
<svg style="left:649px;top:208.1px" width="10" height="13" viewBox="0 0 10 13"><path d="M2 1.4l5.4 5.2L2 11.8" stroke="#c4c4c8" stroke-width="1.5" fill="none"/></svg>
<div style="left:256px;top:235.2px;width:413px;height:21.1px;background:#f7f7f7;"></div>
<span class="t" id="t40" style="left:264.70px;top:236.45px;font-size:14.4px;color:#111;">C</span>
<span class="t" id="t41" style="left:264.70px;top:267.29px;font-size:15.0px;color:#3c7ab4;font-weight:bold;transform:scaleX(0.9614);transform-origin:0 0;">Carrots</span>
<svg style="left:649px;top:268.8px" width="10" height="13" viewBox="0 0 10 13"><path d="M2 1.4l5.4 5.2L2 11.8" stroke="#c4c4c8" stroke-width="1.5" fill="none"/></svg>
<div style="left:256px;top:295.9px;width:413px;height:21.1px;background:#f7f7f7;"></div>
<span class="t" id="t42" style="left:264.70px;top:297.12px;font-size:14.4px;color:#111;">D</span>
<span class="t" id="t43" style="left:264.70px;top:327.96px;font-size:15.0px;color:#3c7ab4;font-weight:bold;transform:scaleX(0.9928);transform-origin:0 0;">Donuts</span>
<svg style="left:649px;top:329.5px" width="10" height="13" viewBox="0 0 10 13"><path d="M2 1.4l5.4 5.2L2 11.8" stroke="#c4c4c8" stroke-width="1.5" fill="none"/></svg>
<div style="left:256px;top:356.6px;width:413px;height:21.1px;background:#f7f7f7;"></div>
<span class="t" id="t44" style="left:264.70px;top:357.79px;font-size:14.4px;color:#111;">E</span>
<span class="t" id="t45" style="left:264.70px;top:388.63px;font-size:15.0px;color:#3c7ab4;font-weight:bold;transform:scaleX(0.9077);transform-origin:0 0;">Eggs</span>
<svg style="left:649px;top:390.1px" width="10" height="13" viewBox="0 0 10 13"><path d="M2 1.4l5.4 5.2L2 11.8" stroke="#c4c4c8" stroke-width="1.5" fill="none"/></svg>
<div style="left:257px;top:416px;width:412px;height:1px;background:#dedede;"></div>
<span class="t" id="t46" style="left:264.70px;top:428.25px;font-size:15.0px;color:#3c7ab4;font-weight:bold;transform:scaleX(0.9431);transform-origin:0 0;">Enchiladas</span>
<svg style="left:649px;top:429.8px" width="10" height="13" viewBox="0 0 10 13"><path d="M2 1.4l5.4 5.2L2 11.8" stroke="#c4c4c8" stroke-width="1.5" fill="none"/></svg>
<div style="left:256px;top:456.9px;width:413px;height:21.1px;background:#f7f7f7;"></div>
<span class="t" id="t47" style="left:264.70px;top:458.08px;font-size:14.4px;color:#111;">F</span>
<span class="t" id="t48" style="left:264.70px;top:488.92px;font-size:15.0px;color:#3c7ab4;font-weight:bold;transform:scaleX(0.8981);transform-origin:0 0;">Fish</span>
<svg style="left:649px;top:490.4px" width="10" height="13" viewBox="0 0 10 13"><path d="M2 1.4l5.4 5.2L2 11.8" stroke="#c4c4c8" stroke-width="1.5" fill="none"/></svg>
<div style="left:257px;top:516px;width:412px;height:1px;background:#dedede;"></div>
<span class="t" id="t49" style="left:264.70px;top:528.54px;font-size:15.0px;color:#3c7ab4;font-weight:bold;transform:scaleX(0.9627);transform-origin:0 0;">French Bread</span>
<svg style="left:649px;top:530.0px" width="10" height="13" viewBox="0 0 10 13"><path d="M2 1.4l5.4 5.2L2 11.8" stroke="#c4c4c8" stroke-width="1.5" fill="none"/></svg>
<div style="left:257px;top:556px;width:412px;height:1px;background:#dedede;"></div>
<span class="t" id="t50" style="left:264.70px;top:568.16px;font-size:15.0px;color:#3c7ab4;font-weight:bold;letter-spacing:0.157px;">Fajita Meat</span>
<svg style="left:649px;top:569.7px" width="10" height="13" viewBox="0 0 10 13"><path d="M2 1.4l5.4 5.2L2 11.8" stroke="#c4c4c8" stroke-width="1.5" fill="none"/></svg>
<div style="left:256px;top:589px;width:413px;height:39px;background:#f8f8f8;"></div>
<svg style="left:308px;top:592px" width="309" height="34" viewBox="0 0 309 34"><rect x="1.500" y="1.300" width="305.500" height="31" fill="none" stroke="#a4a4a4" stroke-width="1" stroke-dasharray="2.200 2"/></svg>
<div style="left:366px;top:596.2px;width:194.2px;height:25.4px;background:#fff;border:1.3px solid #3b8ff0;border-radius:4px;"></div>
<div style="left:430.7px;top:596.2px;width:1.2px;height:25.4px;background:#3b8ff0;"></div>
<div style="left:495.2px;top:596.2px;width:1.2px;height:25.4px;background:#3b8ff0;"></div>
<span class="t" id="t51" style="left:374.80px;top:599.93px;font-size:12.6px;color:#2f86ec;transform:scaleX(0.9834);transform-origin:0 0;">Grouped</span>
<span class="t" id="t52" style="left:441.00px;top:599.93px;font-size:12.6px;color:#2f86ec;transform:scaleX(0.9726);transform-origin:0 0;">Indexed</span>
<span class="t" id="t53" style="left:511.00px;top:599.93px;font-size:12.6px;color:#2f86ec;transform:scaleX(0.9424);transform-origin:0 0;">Styled</span>
<svg style="left:273.2px;top:78.1px" width="27" height="27" viewBox="0 0 27 27"><rect x="0.8" y="0.8" width="24.4" height="24.4" rx="4.2" fill="#e9fbfd" stroke="#3c3c3c" stroke-width="1.3"/><path d="M2.600 2.600h10.800l3.400 3.400v13.600H2.600z" fill="#dcedf9" stroke="#6f9fd0" stroke-width="0.900"/>
<path d="M9 3h4.200l3.200 3.200v13H9z" fill="#f2f9fe"/>
<path d="M2.600 19.600h14.200" stroke="#3f7cbc" stroke-width="1.200"/>
<path d="M13.400 2.800v3.300h3.300" fill="#fff" stroke="#3f7cbc" stroke-width="0.900"/>
<g fill="#3d5f92"><rect x="4.200" y="5.300" width="1.500" height="1.400"/><rect x="4.200" y="8.100" width="1.500" height="1.400"/><rect x="4.200" y="10.900" width="1.500" height="1.400"/><rect x="4.200" y="13.700" width="1.500" height="1.400"/><rect x="4.200" y="16.500" width="1.500" height="1.400"/>
<rect x="6.900" y="5.600" width="4" height="0.900"/><rect x="6.900" y="8.400" width="6.400" height="0.900"/><rect x="6.900" y="11.200" width="6.400" height="0.900"/><rect x="6.900" y="14" width="5" height="0.900"/><rect x="6.900" y="16.800" width="5" height="0.900"/></g>
<path d="M14.800 15.400l6 5.800" stroke="#1f8a52" stroke-width="2.200"/><path d="M12.200 12.900h5.200l-5.200 5.200z" fill="#1f8a52"/><path d="M23 23h-5.200l5.200-5.200z" fill="#1f8a52"/></svg>
<span class="t" id="t54" style="left:254.90px;top:103.22px;font-size:11.2px;color:#111;transform:scaleX(0.9242);transform-origin:0 0;">BindingsList1</span>
<svg style="left:398.2px;top:252.9px" width="27" height="27" viewBox="0 0 27 27"><rect x="0.8" y="0.8" width="24.4" height="24.4" rx="4.2" fill="#e9fbfd" stroke="#3c3c3c" stroke-width="1.3"/><path d="M2.800 4.400c0-1.500 2.100-2.100 4.700-2.100s4.700 0.600 4.700 2.100v6H2.800z" fill="#8fb0b4"/><ellipse cx="7.500" cy="4.400" rx="4.700" ry="1.700" fill="#bcd4d6"/>
<rect x="4.800" y="7.600" width="18" height="14.600" fill="#3a84d2"/><rect x="6.400" y="10.600" width="15" height="10.200" fill="#f4f8fc"/><rect x="5.600" y="10.600" width="1.200" height="10.200" fill="#8fc0f0"/>
<path d="M8.600 15.400l6-3 6.600 3-6.600 3.400z" fill="#8e949c"/><path d="M10.800 15l3.800-1.800 4.200 1.800-4.200 2.100z" fill="#d8dbde"/>
<path d="M8.600 15.400v1.600l6 3.400 6.600-3.400v-1.600l-6.600 3.400z" fill="#5a6068"/>
<path d="M8.200 17.800l6.400 3.600 7-3.600" stroke="#f2e21c" stroke-width="1.700" stroke-dasharray="1.200 1" fill="none"/></svg>
<div style="left:376px;top:281px;width:69px;height:15px;background:#fff;"></div>
<span class="t" id="t55" style="left:377.70px;top:277.12px;font-size:11.2px;color:#111;transform:scaleX(0.8935);transform-origin:0 0;">FDMemTable1</span>
<svg style="left:455.4px;top:345.8px" width="27" height="27" viewBox="0 0 27 27"><rect x="0.8" y="0.8" width="24.4" height="24.4" rx="4.2" fill="#e9fbfd" stroke="#3c3c3c" stroke-width="1.3"/><circle cx="12" cy="9.200" r="7.400" fill="#eef8fc" stroke="#8aa6c2" stroke-width="1"/><circle cx="12" cy="9.200" r="4.600" fill="none" stroke="#a9c0d6" stroke-width="0.900"/><circle cx="12" cy="9.200" r="2" fill="none" stroke="#bccfe0" stroke-width="0.800"/>
<path d="M12 1.200v16.600M2.800 8.300h17.600" stroke="#3f5e7e" stroke-width="1.100"/>
<rect x="2.700" y="12.800" width="6.800" height="9.800" rx="1.300" fill="#f6e2c8" stroke="#e07a1c" stroke-width="1"/><path d="M3 15.200h6.200M3 17.700h6.200M3 20.200h6.200" stroke="#e8862c" stroke-width="1.200"/>
<path d="M15.800 13l5.800 5.800" stroke="#1f8a52" stroke-width="2.100"/><path d="M13.400 10.600h5l-5 5z" fill="#1f8a52"/><path d="M23.400 20.800h-5l5-5z" fill="#1f8a52"/></svg>
<span class="t" id="t56" style="left:432.00px;top:370.52px;font-size:11.2px;color:#111;transform:scaleX(0.8956);transform-origin:0 0;">BindSourceDB1</span>
</div></div>
<div style="left:671.5px;top:627.5px;width:6px;height:6px;background:#fff;border:1px solid #2a2ad8;"></div>
<div style="left:515px;top:191px;width:491px;height:293px;background:#f0f0f0;border:1px solid #fcfcfc;box-shadow:0 1px 10px 1px rgba(0,0,0,0.30);"></div>
<div style="left:515px;top:191px;width:491px;height:28px;background:#fff;"></div>
<span class="t" id="t57" style="left:522.00px;top:195.05px;font-size:11.4px;color:#b5abab;transform:scaleX(0.9132);transform-origin:0 0;">LiveBindings Designer</span>
<div style="left:988.3px;top:199px;width:17px;height:16px;background:#c3c3c3;"></div>
<span class="t" id="t58" style="left:994.20px;top:196.71px;font-size:9.5px;color:#fff;font-weight:bold;">x</span>
<span class="t" id="t59" style="left:518.60px;top:219.57px;font-size:9.9px;color:#000;transform:scaleX(0.9579);transform-origin:0 0;-webkit-text-stroke:0.25px #000;">Form24</span>
<span class="t" id="t60" style="left:558.80px;top:219.57px;font-size:9.9px;color:#000;transform:scaleX(0.9694);transform-origin:0 0;-webkit-text-stroke:0.25px #000;">- Default Layer</span>
<svg style="left:814px;top:224px" width="13" height="11" viewBox="0 0 13 11"><path d="M0.8 0.8h11L6.300 9.800z" fill="#111"/></svg>
<span class="t" id="t61" style="left:830.50px;top:220.07px;font-size:9.9px;color:#000;transform:scaleX(0.9615);transform-origin:0 0;-webkit-text-stroke:0.25px #000;">Layers</span>
<svg style="left:972px;top:221px" width="16" height="16" viewBox="0 0 16 16">
<path d="M6 1.800h3.400v4.400h4.400v3.400H9.400v4.400H6V9.600H1.600V6.200H6z" fill="#7ad020" stroke="#2c7a10" stroke-width="1"/></svg>
<div style="left:537px;top:239px;width:468px;height:1px;background:#b2b2b2;"></div>
<div style="left:538px;top:240px;width:467px;height:1px;background:#dedede;"></div>
<div style="left:537px;top:239px;width:1px;height:244.5px;background:#a6a6a6;"></div>
<div style="left:516px;top:240px;width:20px;height:17.6px;background:#f0f0f0;border:1px solid #cfcfcf;"></div>
<div style="left:516px;top:260.4px;width:20px;height:17.6px;background:#f0f0f0;border:1px solid #cfcfcf;"></div>
<div style="left:516px;top:280.2px;width:20px;height:17.6px;background:#f0f0f0;border:1px solid #cfcfcf;"></div>
<div style="left:516px;top:299.6px;width:20px;height:17.6px;background:#f0f0f0;border:1px solid #cfcfcf;"></div>
<div style="left:516px;top:319.2px;width:20px;height:17.6px;background:#f0f0f0;border:1px solid #cfcfcf;"></div>
<div style="left:516px;top:338.9px;width:20px;height:17.6px;background:#f0f0f0;border:1px solid #cfcfcf;"></div>
<svg style="left:516px;top:240px" width="20" height="118" viewBox="0 0 20 118">
<path d="M17.500 3.500v13h-13z" fill="#e8f0f8"/>
<g fill="#2a5a80"><rect x="16" y="4.500" width="1.300" height="1.300"/><rect x="14.200" y="6.300" width="1.300" height="1.300"/><rect x="16" y="8.100" width="1.300" height="1.300"/><rect x="12.400" y="8.100" width="1.300" height="1.300"/><rect x="14.200" y="9.900" width="1.300" height="1.300"/><rect x="10.600" y="9.900" width="1.300" height="1.300"/><rect x="16" y="11.700" width="1.300" height="1.300"/><rect x="12.400" y="11.700" width="1.300" height="1.300"/><rect x="8.800" y="11.700" width="1.300" height="1.300"/><rect x="14.200" y="13.500" width="1.300" height="1.300"/><rect x="10.600" y="13.500" width="1.300" height="1.300"/><rect x="7" y="13.500" width="1.300" height="1.300"/><rect x="16" y="15.200" width="1.300" height="1.300"/><rect x="12.400" y="15.200" width="1.300" height="1.300"/><rect x="8.800" y="15.200" width="1.300" height="1.300"/><rect x="5.200" y="15.200" width="1.300" height="1.300"/></g>
<path d="M8.700 25.400h2.600v2.600h2.600v2.600h-2.600v2.600H8.700v-2.600H6.100v-2.600h2.600z" fill="#fff" stroke="#111" stroke-width="1.100"/>
<rect x="6.300" y="47.700" width="7.600" height="2.600" fill="#fff" stroke="#111" stroke-width="1.100"/>
<path d="M7 71.500c1.200-4.600 7-4.600 7.600-0.200" stroke="#2878b0" stroke-width="1.700" fill="none"/><path d="M4.600 67.300l0.600 5.200 4.600-1.800z" fill="#2878b0"/>
<g fill="#fff" stroke="#7a7a7a" stroke-width="0.9" transform="translate(0,1)"><rect x="2.800" y="82" width="4" height="2.600"/><rect x="8" y="82" width="4" height="2.600"/><rect x="13.200" y="82" width="4" height="2.600"/><rect x="2.800" y="86.500" width="4" height="2.600"/><rect x="8" y="86.500" width="4" height="2.600"/><rect x="13.200" y="86.500" width="4" height="2.600"/><rect x="2.800" y="91" width="4" height="2.600"/><rect x="8" y="91" width="4" height="2.600"/><rect x="13.200" y="91" width="4" height="2.600"/></g>
<path d="M6 103l9.500 10" stroke="#555" stroke-width="2.600" stroke-linecap="round"/><path d="M7.500 104.600l8 8.400" stroke="#a878c8" stroke-width="1" />
<rect x="3.600" y="100.600" width="3.400" height="3.400" fill="#3060a0" stroke="#222" stroke-width="0.700"/>
<g fill="#f0d020"><rect x="10" y="100.500" width="1.400" height="1.400"/><rect x="12.400" y="103.500" width="1.400" height="1.400"/><rect x="4" y="107.500" width="1.400" height="1.400"/><rect x="6.400" y="111" width="1.400" height="1.400"/></g>
</svg>
<div style="left:550px;top:260px;width:128px;height:200.60000000000002px;background:#78909c;border:1px solid #3a3a3a;border-left-color:#5c5c5c;border-right-color:#5c5c5c;border-radius:8px 8px 7px 7px;box-shadow:0 0 0 1px rgba(255,255,255,0.55);overflow:hidden"></div>
<div style="left:551px;top:283px;width:126px;height:26px;background:#d4d4d4;"></div>
<div style="left:551px;top:282.2px;width:126px;height:1.6px;background:#383838;"></div>
<div style="left:551px;top:309px;width:126px;height:26.19999999999999px;background:#d4d4d4;"></div>
<div style="left:551px;top:308.2px;width:126px;height:1.6px;background:#383838;"></div>
<div style="left:551px;top:335.2px;width:126px;height:26.5px;background:#d4d4d4;"></div>
<div style="left:551px;top:334.4px;width:126px;height:1.6px;background:#383838;"></div>
<div style="left:551px;top:361.7px;width:126px;height:26.30000000000001px;background:#d4d4d4;"></div>
<div style="left:551px;top:360.9px;width:126px;height:1.6px;background:#383838;"></div>
<div style="left:551px;top:388px;width:126px;height:26.19999999999999px;background:#d4d4d4;"></div>
<div style="left:551px;top:387.2px;width:126px;height:1.6px;background:#383838;"></div>
<div style="left:551px;top:414.2px;width:126px;height:26.0px;background:#d4d4d4;"></div>
<div style="left:551px;top:413.4px;width:126px;height:1.6px;background:#383838;"></div>
<div style="left:551px;top:439.4px;width:126px;height:1.6px;background:#383838;"></div>
<svg style="left:653.6px;top:451.3px" width="21" height="6" viewBox="0 0 21 6"><circle cx="2.700" cy="3" r="2.400" fill="#0a0a0a"/><circle cx="10.200" cy="3" r="2.400" fill="#0a0a0a"/><circle cx="17.700" cy="3" r="2.400" fill="#0a0a0a"/></svg>
<span class="t" id="t62" style="left:578.40px;top:262.50px;font-size:15px;color:#111;font-weight:bold;letter-spacing:0.085px;">ListView1</span>
<span class="t" id="t63" style="left:555.20px;top:284.91px;font-size:14.4px;color:#111;letter-spacing:0.104px;">SelectedValue</span>
<span class="t" id="t64" style="left:555.20px;top:310.91px;font-size:14.4px;color:#111;transform:scaleX(0.9850);transform-origin:0 0;">Synch</span>
<span class="t" id="t65" style="left:555.20px;top:337.11px;font-size:14.4px;color:#111;transform:scaleX(0.9899);transform-origin:0 0;">Item.Text</span>
<span class="t" id="t66" style="left:555.20px;top:363.61px;font-size:14.4px;color:#111;transform:scaleX(0.9798);transform-origin:0 0;">Item.LookupData</span>
<span class="t" id="t67" style="left:555.20px;top:389.91px;font-size:14.4px;color:#111;letter-spacing:0.044px;">ItemHeader.Text</span>
<span class="t" id="t68" style="left:555.20px;top:416.11px;font-size:14.4px;color:#111;transform:scaleX(0.9915);transform-origin:0 0;">ItemHeader.Break</span>
<div style="left:772px;top:251px;width:127px;height:218px;background:#78909c;border:1px solid #3a3a3a;border-left-color:#5c5c5c;border-right-color:#5c5c5c;border-radius:8px 8px 7px 7px;box-shadow:0 0 0 1px rgba(255,255,255,0.55);overflow:hidden"></div>
<div style="left:773px;top:275px;width:125px;height:25.5px;background:#7fa398;"></div>
<div style="left:773px;top:274.2px;width:125px;height:1.6px;background:#383838;"></div>
<div style="left:773px;top:300.5px;width:125px;height:26.30000000000001px;background:#d4d4d4;"></div>
<div style="left:773px;top:299.7px;width:125px;height:1.6px;background:#383838;"></div>
<div style="left:773px;top:326.8px;width:125px;height:26.19999999999999px;background:#d4d4d4;"></div>
<div style="left:773px;top:326.0px;width:125px;height:1.6px;background:#383838;"></div>
<div style="left:773px;top:353px;width:125px;height:42.5px;background:#d4d4d4;"></div>
<div style="left:773px;top:352.2px;width:125px;height:1.6px;background:#383838;"></div>
<div style="left:773px;top:395.5px;width:125px;height:26.30000000000001px;background:#d4d4d4;"></div>
<div style="left:773px;top:394.7px;width:125px;height:1.6px;background:#383838;"></div>
<div style="left:773px;top:421.8px;width:125px;height:26.399999999999977px;background:#d4d4d4;"></div>
<div style="left:773px;top:421.0px;width:125px;height:1.6px;background:#383838;"></div>
<div style="left:773px;top:447.4px;width:125px;height:1.6px;background:#383838;"></div>
<svg style="left:874.5px;top:458.9px" width="21" height="6" viewBox="0 0 21 6"><circle cx="2.700" cy="3" r="2.400" fill="#0a0a0a"/><circle cx="10.200" cy="3" r="2.400" fill="#0a0a0a"/><circle cx="17.700" cy="3" r="2.400" fill="#0a0a0a"/></svg>
<span class="t" id="t69" style="left:778.50px;top:254.00px;font-size:15px;color:#111;font-weight:bold;transform:scaleX(0.9914);transform-origin:0 0;">BindSourceDB1</span>
<span class="t" id="t70" style="left:777.70px;top:276.91px;font-size:14.4px;color:#1c1c1c;letter-spacing:0.072px;">FDMemTable1</span>
<span class="t" id="t71" style="left:777.80px;top:303.10px;font-size:13px;color:#111;">*</span>
<span class="t" id="t72" style="left:777.40px;top:329.11px;font-size:14.4px;color:#111;letter-spacing:0.041px;">_id</span>
<span class="t" id="t73" style="left:777.40px;top:364.11px;font-size:14.4px;color:#111;transform:scaleX(0.9962);transform-origin:0 0;">Food Name</span>
<span class="t" id="t74" style="left:777.40px;top:397.81px;font-size:14.4px;color:#111;letter-spacing:0.031px;">_acl</span>
<span class="t" id="t75" style="left:777.40px;top:425.01px;font-size:14.4px;color:#111;transform:scaleX(0.9942);transform-origin:0 0;">_kmd</span>
<svg style="left:675.3px;top:336px" width="100" height="72" viewBox="0 0 100 72">
<path d="M15 10H49.500V26.500H97.500" stroke="#3434b4" stroke-width="1.100" fill="none"/>
<path d="M15 61H49.500V49.500H96.500" stroke="#3434b4" stroke-width="1.100" fill="none"/>
<path d="M2 10l13.500-5.800v11.600z" fill="#00008c"/>
<path d="M2 61l13.500-5.800v11.600z" fill="#00008c"/>
</svg>
</body></html>
